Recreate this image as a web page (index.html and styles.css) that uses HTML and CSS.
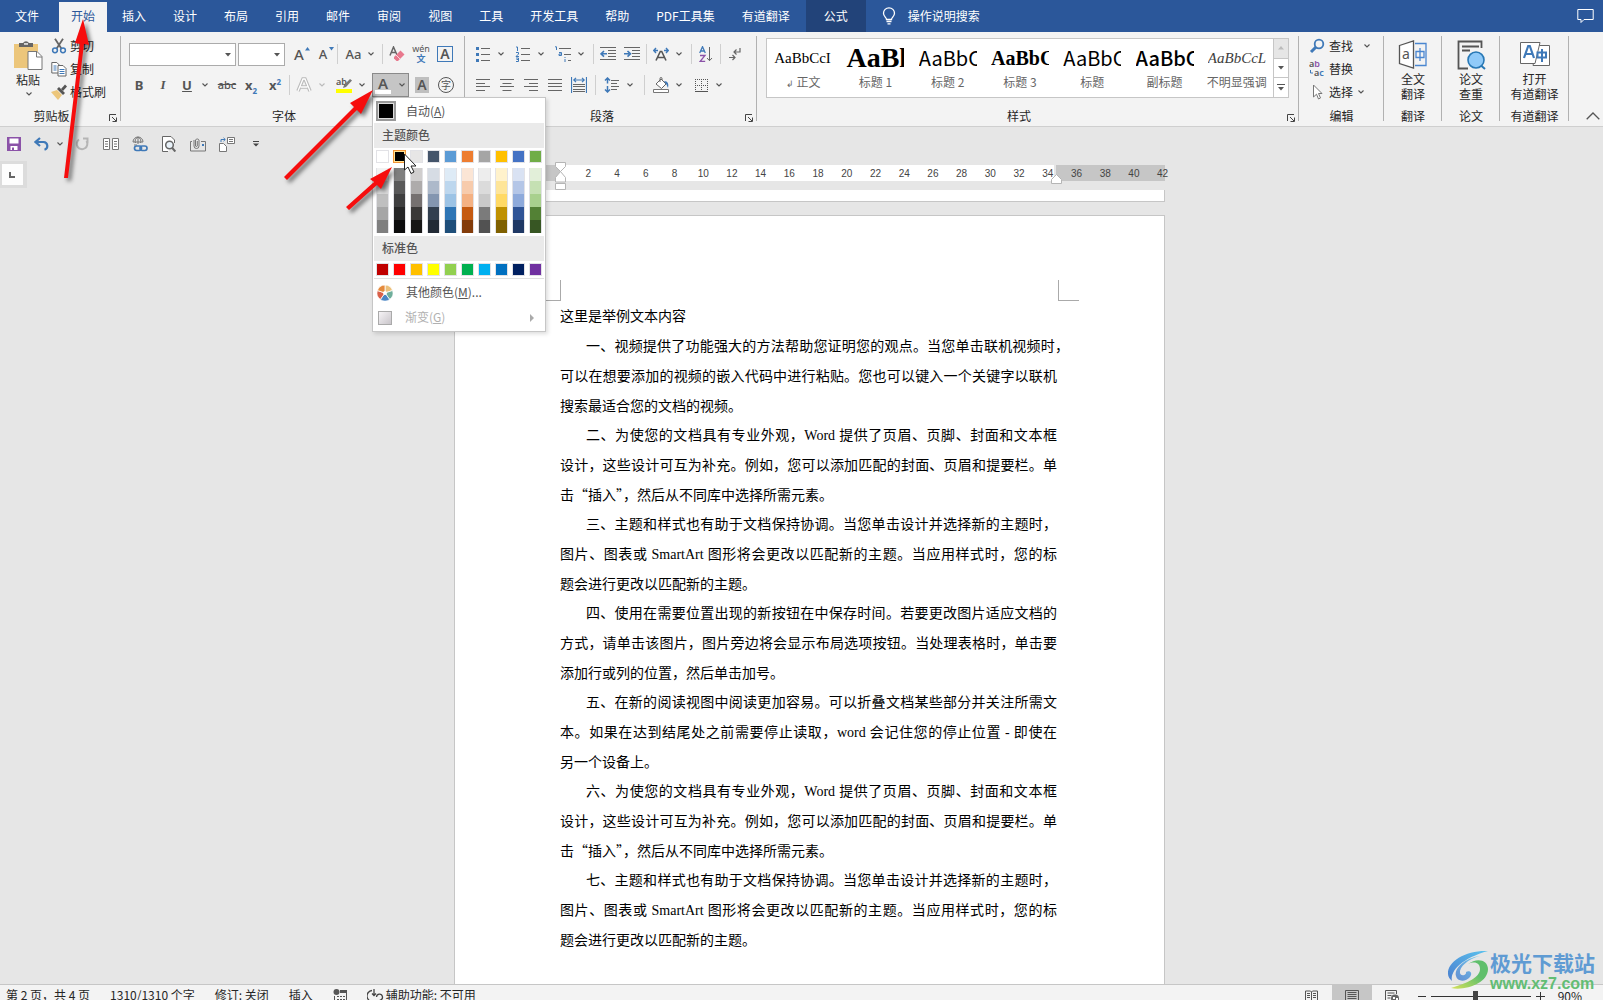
FILE: index.html
```html
<!DOCTYPE html>
<html lang="zh-CN">
<head>
<meta charset="utf-8">
<title>文档</title>
<link rel="stylesheet" href="styles.css">
</head>
<body>
<svg class="defs" aria-hidden="true">
  <symbol id="chev" viewBox="0 0 6 4"><path d="m.5.5 2.500 2.500L5.500.5" fill="none" stroke="currentColor" stroke-width="1.100"/></symbol>
  <symbol id="tri" viewBox="0 0 6 4"><path d="M0 0h6L3 3.500z" fill="currentColor"/></symbol>
  <symbol id="launch" viewBox="0 0 8 8"><path d="M.5 7V.5H7M3 3l4 4M7.500 3.500v4h-4" fill="none" stroke="#444"/></symbol>
</svg>

<nav class="tabs" aria-label="功能区选项卡">
  <button class="tab tab-file">文件</button>
  <button class="tab tab-active">开始</button>
  <button class="tab">插入</button>
  <button class="tab">设计</button>
  <button class="tab">布局</button>
  <button class="tab">引用</button>
  <button class="tab">邮件</button>
  <button class="tab">审阅</button>
  <button class="tab">视图</button>
  <button class="tab">工具</button>
  <button class="tab">开发工具</button>
  <button class="tab">帮助</button>
  <button class="tab">PDF工具集</button>
  <button class="tab">有道翻译</button>
  <button class="tab tab-context">公式</button>
  <button class="tell-me">
    <svg width="14" height="18" viewBox="0 0 14 18" fill="none" stroke="#fff" stroke-width="1.300"><path d="M4.500 12.500c0-2-3-3-3-6.200a5.500 5.500 0 0 1 11 0c0 3.200-3 4.200-3 6.200zM4.500 14.500h5M5.500 16.800h3"/></svg>
    操作说明搜索
  </button>
  <button class="comments" aria-label="批注">
    <svg width="17" height="16" viewBox="0 0 17 16" fill="none" stroke="#fff"><path d="M.8 1.500h15.400v10H7l-3 3v-3H.8z"/></svg>
  </button>
</nav>

<section class="ribbon" aria-label="开始">
  <div class="group group-clip">
    <div class="clip-body">
      <button class="big-btn paste">
        <svg width="30" height="31" viewBox="0 0 30 31"><path d="M1 4h24v24H1z" fill="#ecc67b"/><path d="M6 7V3h4a3.500 3.500 0 0 1 6 0h4v4z" fill="#666"/><path d="M11 3.200h4v1.500h-4z" fill="#f3f3f3"/><path d="M15 11.500h9l5 5v13H15z" fill="#fff" stroke="#777"/><path d="M23.500 11.500v5.500h5.500" fill="none" stroke="#777"/></svg>
        <span>粘贴</span>
        <svg class="chev-icon" width="6" height="4"><use href="#chev"/></svg>
      </button>
      <div class="stack">
        <button class="row-btn">
          <svg width="16" height="16" viewBox="0 0 16 16" fill="none"><path d="m4 .8 6.500 10M12 .8 5.500 10.800" stroke="#666" stroke-width="1.800"/><circle cx="4" cy="12.300" r="2.400" stroke="#3f79b8" stroke-width="1.500"/><circle cx="12" cy="12.300" r="2.400" stroke="#3f79b8" stroke-width="1.500"/></svg>剪切</button>
        <button class="row-btn">
          <svg width="16" height="16" viewBox="0 0 16 16" fill="#fff" stroke="#666"><path d="M.8 1.500h5l2.500 2.500v8H.8z"/><path d="M7 4.500h5l3 3v7.500H7z"/><path d="M2.500 5h3M2.500 7h3M2.500 9h3M8.500 8.500h5M8.500 10.500h5M8.500 12.500h5" stroke="#3f79b8"/></svg>复制</button>
        <button class="row-btn">
          <svg width="16" height="16" viewBox="0 0 16 16"><path d="m0 8 6-2 5 5-4 5z" fill="#ecc67b"/><path d="m6 5 2-2 6 6-2 2z" fill="#555"/><path d="m10 5 4-4.500 2 2L12 7z" fill="#555"/></svg>格式刷</button>
      </div>
    </div>
    <div class="group-label has-launch"><span>剪贴板</span><button class="launch" aria-label="剪贴板设置"><svg width="8" height="8"><use href="#launch"/></svg></button></div>
  </div>

  <div class="group group-font">
    <div class="rows">
      <div class="row">
        <span class="combo combo-font"><select aria-label="字体"><option></option></select><svg width="6" height="4"><use href="#tri"/></svg></span>
        <span class="combo combo-size"><select aria-label="字号"><option></option></select><svg width="6" height="4"><use href="#tri"/></svg></span>
        <button class="btn" aria-label="增大字号"><span class="glyph g16">A</span><svg class="sup" width="5" height="4" viewBox="0 0 5 4"><path d="M0 3.500h5L2.500 0z" fill="#3f79b8"/></svg></button>
        <button class="btn" aria-label="减小字号"><span class="glyph g13">A</span><svg class="sup" width="5" height="4" viewBox="0 0 5 4"><path d="M0 0h5L2.500 3.500z" fill="#3f79b8"/></svg></button>
        <i class="sep"></i>
        <button class="btn btn-case" aria-label="更改大小写"><span class="glyph g13">Aa</span><svg width="6" height="4"><use href="#chev"/></svg></button>
        <i class="sep"></i>
        <button class="btn" aria-label="清除格式"><svg width="16" height="16" viewBox="0 0 16 16"><path d="M1 9.500 4.500 1 8 9M2.300 6.500h4" fill="none" stroke="#666" stroke-width="1.500"/><path d="m5 11 6.500-6.500 4 4L9 15H7.500L5 12.500z" fill="#e8788d"/><path d="m7 9 4.200 4.200" stroke="#f9d5db"/></svg></button>
        <button class="btn btn-pinyin" aria-label="拼音指南"><span>wén</span><span class="blue">文</span></button>
        <button class="btn" aria-label="字符边框"><span class="char-box">A</span></button>
      </div>
      <div class="row">
        <button class="btn"><b class="glyph g14">B</b></button>
        <button class="btn"><b class="glyph g14 ital">I</b></button>
        <button class="btn"><b class="glyph g14 under">U</b></button>
        <button class="chev" aria-label="下划线选项"><svg width="6" height="4"><use href="#chev"/></svg></button>
        <button class="btn"><span class="glyph g12 strike">abc</span></button>
        <button class="btn"><span class="glyph g14">x<sub>2</sub></span></button>
        <button class="btn"><span class="glyph g14">x<sup>2</sup></span></button>
        <i class="sep"></i>
        <button class="btn" aria-label="文本效果"><svg width="16" height="16" viewBox="0 0 16 16"><path d="M2 14 7 2h2l5 12M4.500 10h7" fill="none" stroke="#bbb" stroke-width="3.500"/><path d="M2 14 7 2h2l5 12M4.500 10h7" fill="none" stroke="#fff" stroke-width="1.300"/></svg></button>
        <button class="chev dim" aria-label="文本效果选项"><svg width="6" height="4"><use href="#chev"/></svg></button>
        <button class="btn btn-mark" aria-label="突出显示"><svg width="16" height="16" viewBox="0 0 16 16"><text x="0" y="8" class="svg-ab">ab</text><path d="m7 11 1-3 6-6 2 1.500-6 6.500z" fill="#777"/><path d="M0 12h16v4H0z" fill="#ff0"/></svg></button>
        <button class="chev" aria-label="突出显示选项"><svg width="6" height="4"><use href="#chev"/></svg></button>
        <div class="color-drop">
          <button class="color-btn" aria-label="字体颜色" aria-expanded="true"><span class="color-a">A</span><svg width="6" height="4"><use href="#chev"/></svg></button>
          <div class="color-menu" role="menu">
            <button class="menu-row auto-row"><i class="auto-swatch"></i><span>自动(<u>A</u>)</span></button>
            <h3 class="menu-head">主题颜色</h3>
            <div class="swatches" id="theme"></div>
            <div class="shades" id="shades"></div>
            <h3 class="menu-head">标准色</h3>
            <div class="swatches" id="standard"></div>
            <button class="menu-row more-row">
              <svg width="16" height="16" viewBox="0 0 16 16"><g stroke="#fff" stroke-width=".8"><path d="M8 8V0a8 8 0 0 1 7.600 5.500z" fill="#ecc07b"/><path d="m8 8 7.600-2.500a8 8 0 0 1-2.900 9z" fill="#6fae9b"/><path d="m8 8 4.700 6.500a8 8 0 0 1-9.400 0z" fill="#4a86c5"/><path d="m8 8-4.700 6.500a8 8 0 0 1-2.900-9z" fill="#d9604a"/><path d="M8 8 .4 5.500A8 8 0 0 1 8 0z" fill="#e58a3c"/></g><circle cx="8" cy="8" r="2" fill="#fff"/></svg>
              <span>其他颜色(<u>M</u>)...</span></button>
            <button class="menu-row grad-row" disabled><i class="grad-swatch"></i><span>渐变(<u>G</u>)</span><svg class="sub-arrow" width="4" height="8" viewBox="0 0 4 8"><path d="M0 0v8l4-4z" fill="#aaa"/></svg></button>
          </div>
        </div>
        <button class="btn" aria-label="字符底纹"><span class="char-shade">A</span></button>
        <button class="btn" aria-label="带圈字符"><span class="char-ring">字</span></button>
      </div>
    </div>
    <div class="group-label has-launch"><span>字体</span></div>
  </div>

  <div class="group group-para">
    <div class="rows">
      <div class="row">
        <button class="btn" aria-label="项目符号"><svg width="16" height="16" viewBox="0 0 16 16"><path d="M1 1h3v3H1zM1 7h3v3H1zM1 13h3v3H1z" fill="#3f79b8"/><path d="M6 2.500h9M6 8.500h9M6 14.500h9" stroke="#666"/></svg></button>
        <button class="chev" aria-label="项目符号选项"><svg width="6" height="4"><use href="#chev"/></svg></button>
        <button class="btn" aria-label="编号"><svg width="16" height="16" viewBox="0 0 16 16"><path d="M1 1h1.500v4M1 6.500h2.500V8L1 10.500h3M1 12h2.500v3.500H1M1.500 13.500h2" fill="none" stroke="#3f79b8"/><path d="M6 2.500h9M6 8.500h9M6 14.500h9" stroke="#666"/></svg></button>
        <button class="chev" aria-label="编号选项"><svg width="6" height="4"><use href="#chev"/></svg></button>
        <button class="btn" aria-label="多级列表"><svg width="16" height="16" viewBox="0 0 16 16"><path d="M0 .8h1.500V4M4 6.500h2.500V9.500H4V8h2.500M10 11v1M10 13v3" fill="none" stroke="#3f79b8"/><path d="M4 2.500h12M9 8.500h7M13 14.500h3" stroke="#666"/></svg></button>
        <button class="chev" aria-label="多级列表选项"><svg width="6" height="4"><use href="#chev"/></svg></button>
        <i class="sep"></i>
        <button class="btn" aria-label="减少缩进"><svg width="16" height="14" viewBox="0 0 16 14"><path d="M0 .5h16M8 3.500h8M8 6.500h8M8 9.500h8M0 12.500h16" stroke="#666"/><path d="M7 6.800H2M4 4 1 6.800 4 9.600" fill="none" stroke="#3f79b8" stroke-width="1.600"/></svg></button>
        <button class="btn" aria-label="增加缩进"><svg width="16" height="14" viewBox="0 0 16 14"><path d="M0 .5h16M8 3.500h8M8 6.500h8M8 9.500h8M0 12.500h16" stroke="#666"/><path d="M0 6.800h5M3.500 4l3 2.800-3 2.800" fill="none" stroke="#3f79b8" stroke-width="1.600"/></svg></button>
        <i class="sep"></i>
        <button class="btn" aria-label="中文版式"><svg width="16" height="14" viewBox="0 0 16 14"><path d="m3 13.500 4.300-9h1.400l4.300 9M5 10.500h6" fill="none" stroke="#555" stroke-width="1.600"/><path d="M1 3.500h4M3 1 .8 3.500 3 6M11 3.500h4M13 1l2.200 2.500L13 6" fill="none" stroke="#3f79b8" stroke-width="1.400"/></svg></button>
        <button class="chev" aria-label="中文版式选项"><svg width="6" height="4"><use href="#chev"/></svg></button>
        <i class="sep"></i>
        <button class="btn" aria-label="排序"><svg width="14" height="16" viewBox="0 0 14 16" fill="none"><path d="M.7 7 3.500.7 6.300 7M1.500 5h4" stroke="#3f79b8" stroke-width="1.300"/><path d="M1 9.500h5l-5 6h5.200" stroke="#8b52a8" stroke-width="1.300"/><path d="M10.500 1v13.500M8 12l2.500 2.700L13 12" stroke="#666"/></svg></button>
        <i class="sep"></i>
        <button class="btn" aria-label="显示编辑标记"><svg width="12" height="14" viewBox="0 0 12 14" fill="none" stroke="#666" stroke-width="1.200"><path d="M11 1v4H5.500M7.500 2.500 5 5l2.500 2.500M0 10.500h5.500M3.500 8 6 10.500 3.500 13"/></svg></button>
      </div>
      <div class="row">
        <button class="btn" aria-label="左对齐"><svg width="14" height="12" viewBox="0 0 14 12" stroke="#666"><path d="M0 .5h14M0 4.500h9M0 7.500h14M0 11.500h9"/></svg></button>
        <button class="btn" aria-label="居中"><svg width="14" height="12" viewBox="0 0 14 12" stroke="#666"><path d="M0 .5h14M2.500 4.500h9M0 7.500h14M2.500 11.500h9"/></svg></button>
        <button class="btn" aria-label="右对齐"><svg width="14" height="12" viewBox="0 0 14 12" stroke="#666"><path d="M0 .5h14M5 4.500h9M0 7.500h14M5 11.500h9"/></svg></button>
        <button class="btn" aria-label="两端对齐"><svg width="14" height="12" viewBox="0 0 14 12" stroke="#666"><path d="M0 .5h14M0 4.500h14M0 7.500h14M0 11.500h14"/></svg></button>
        <button class="btn" aria-label="分散对齐"><svg width="16" height="16" viewBox="0 0 16 16" fill="none"><path d="M.5 0v16M15.500 0v16M3 3h10M5 .8 2.800 3 5 5.200M11 .8 13.200 3 11 5.200" stroke="#3f79b8" stroke-width="1.200"/><path d="M2 7.500h12M2 9.500h12M2 12.500h12M2 14.500h12" stroke="#666"/></svg></button>
        <i class="sep sep-wide"></i>
        <button class="btn" aria-label="行距"><svg width="16" height="16" viewBox="0 0 16 16" fill="none"><path d="M3.500 1v5.500M3.500 9v6M1 3.500 3.500 1 6 3.500M1 12.500 3.500 15 6 12.500" stroke="#3f79b8" stroke-width="1.500"/><path d="M7 3.500h8M7 6.500h6M7 9.500h8M7 12.500h6" stroke="#666"/></svg></button>
        <button class="chev" aria-label="行距选项"><svg width="6" height="4"><use href="#chev"/></svg></button>
        <i class="sep sep-wide"></i>
        <button class="btn" aria-label="底纹"><svg width="16" height="16" viewBox="0 0 16 16"><path d="m3 7 5-5 5 5-4.500 4.500z" fill="#fff" stroke="#666"/><path d="M7 5V1.500a1 1 0 0 1 2 0V3" fill="none" stroke="#666"/><path d="M11 4c4 0 5 3 4 7-1-2-1-3-2-4z" fill="#3f79b8"/><path d="M.5 12.500h15v3H.5z" fill="#fff" stroke="#777"/></svg></button>
        <button class="chev" aria-label="底纹选项"><svg width="6" height="4"><use href="#chev"/></svg></button>
        <button class="btn" aria-label="边框"><svg width="13" height="13" viewBox="0 0 13 13" fill="none" stroke="#555"><path d="M0 .5h13M.5 0v13M6.500 0v13M12.500 0v13M0 6.500h13" stroke-dasharray="1 1"/><path d="M0 12.500h13"/></svg></button>
        <button class="chev" aria-label="边框选项"><svg width="6" height="4"><use href="#chev"/></svg></button>
      </div>
    </div>
    <div class="group-label has-launch"><span>段落</span><button class="launch" aria-label="段落设置"><svg width="8" height="8"><use href="#launch"/></svg></button></div>
  </div>

  <div class="group group-styles">
    <div class="gallery">
      <button class="style"><span class="sample s-body">AaBbCcI</span><span><small>↲</small> 正文</span></button>
      <button class="style"><span class="sample s-h1">AaBl</span><span>标题 1</span></button>
      <button class="style"><span class="sample s-h2">AaBbC</span><span>标题 2</span></button>
      <button class="style"><span class="sample s-h3">AaBbC</span><span>标题 3</span></button>
      <button class="style"><span class="sample s-h2">AaBbC</span><span>标题</span></button>
      <button class="style"><span class="sample s-sub">AaBbC</span><span>副标题</span></button>
      <button class="style"><span class="sample s-em">AaBbCcL</span><span>不明显强调</span></button>
      <div class="gallery-nav">
        <button disabled aria-label="上一行"><svg width="6" height="4" viewBox="0 0 6 4"><path d="M0 3.500h6L3 0z" fill="#bbb"/></svg></button>
        <button aria-label="下一行"><svg width="6" height="4"><use href="#tri"/></svg></button>
        <button aria-label="其他样式"><svg width="8" height="7" viewBox="0 0 8 7"><path d="M0 .5h8" stroke="#555"/><path d="M1 3h6L4 6.500z" fill="#555"/></svg></button>
      </div>
    </div>
    <div class="group-label has-launch"><span>样式</span><button class="launch" aria-label="样式设置"><svg width="8" height="8"><use href="#launch"/></svg></button></div>
  </div>

  <div class="group group-edit">
    <div class="stack">
      <button class="row-btn"><svg width="16" height="16" viewBox="0 0 16 16" fill="none" stroke="#3f79b8"><circle cx="10" cy="6" r="4.300" stroke-width="1.800"/><path d="m7 9-5 5" stroke-width="3"/></svg>查找<svg class="far" width="6" height="4"><use href="#chev"/></svg></button>
      <button class="row-btn"><svg width="16" height="16" viewBox="0 0 16 16"><text x="0" y="6" class="svg-ab">a<tspan fill="#8b52a8">b</tspan></text><text x="5" y="15" class="svg-ab">a<tspan fill="#3f79b8">c</tspan></text><path d="M1.500 9v3h2.500" fill="none" stroke="#3f79b8"/></svg>替换</button>
      <button class="row-btn"><svg width="16" height="16" viewBox="0 0 16 16"><path d="M4.500 1v12l3-2.800 2 4.800 2-1-2-4.500h3.500z" fill="#fff" stroke="#777"/></svg>选择<svg class="near" width="6" height="4"><use href="#chev"/></svg></button>
    </div>
    <div class="group-label"><span>编辑</span></div>
  </div>

  <div class="group group-add">
    <button class="big-btn">
      <svg width="30" height="30" viewBox="0 0 30 30" fill="none"><path d="M1.500 5.500 15.500 1v27l-14-4.500z" fill="#fff" stroke="#555" stroke-width="1.300"/><path d="M17 3.500h11v22H17" stroke="#4a86d0" stroke-width="1.300"/><text x="4" y="19" class="svg-a">a</text><path d="M18 11.500h8v6h-8zM22 8v13" stroke="#4a86d0" stroke-width="1.300"/></svg>
      <span>全文<br>翻译</span></button>
    <div class="group-label"><span>翻译</span></div>
  </div>
  <div class="group group-add">
    <button class="big-btn">
      <svg width="30" height="30" viewBox="0 0 30 30" fill="none"><path d="M25.500 8V1.500h-23v27H12" stroke="#555" stroke-width="1.800"/><path d="M6 6.500h17M6 10.500h8" stroke="#555" stroke-width="2"/><circle cx="20" cy="20" r="8" fill="#90caf9" stroke="#2878b5" stroke-width="1.600"/><path d="m25 25.500 4 3.500" stroke="#2878b5" stroke-width="2"/></svg>
      <span>论文<br>查重</span></button>
    <div class="group-label"><span>论文</span></div>
  </div>
  <div class="group group-youdao">
    <button class="big-btn">
      <svg width="30" height="30" viewBox="0 0 30 30" fill="none"><path d="M17 5.500h12.500v20H13z" fill="#fff" stroke="#666"/><path d="M.5 2.500h19.500l-5 21H.5z" fill="#fff" stroke="#666"/><path d="M4 18 8.200 6h1.600L14 18M5.500 14h7" stroke="#3f79b8" stroke-width="2.200"/><path d="M17.500 12.500h8.500v5h-8.500zM22 9v13" stroke="#3f79b8" stroke-width="2"/></svg>
      <span>打开<br>有道翻译</span></button>
    <div class="group-label"><span>有道翻译</span></div>
  </div>
  <button class="collapse" aria-label="折叠功能区"><svg width="14" height="8" viewBox="0 0 14 8" fill="none" stroke="#555" stroke-width="1.300"><path d="m.7 7.300 6.300-6.300 6.300 6.300"/></svg></button>
</section>

<div class="quick" role="toolbar" aria-label="快速访问工具栏">
  <button class="btn q-save" aria-label="保存"><svg width="14" height="14" viewBox="0 0 14 14"><path d="M0 0h14v14H0z" fill="#8b52a8"/><path d="M2.500 1.500h9v5h-9zM3.500 9h7v4h-7z" fill="#fff"/><path d="M5 10.500h2V13H5z" fill="#8b52a8"/></svg></button>
  <button class="btn" aria-label="撤消"><svg width="16" height="14" viewBox="0 0 16 14" fill="none" stroke="#3f79b8" stroke-width="2.200"><path d="M6 1 1.500 5 6 9M2 5h7.500a4 4 0 0 1 1 7.800"/></svg></button>
  <button class="chev" aria-label="撤消选项"><svg width="6" height="4"><use href="#chev"/></svg></button>
  <button class="btn" aria-label="重复"><svg width="14" height="14" viewBox="0 0 14 14" fill="none" stroke="#b5b5b5" stroke-width="2"><path d="M4 2.500A5.300 5.300 0 1 0 11.500 4M8 1.500h4.500V6"/></svg></button>
  <button class="btn" aria-label="双页"><svg width="16" height="12" viewBox="0 0 16 12" fill="#fff" stroke="#777"><path d="M.5.5h6v11h-6zM9.500.5h6v11h-6zM2 3.500h3M2 6h3M2 8.500h3M11 3.500h3M11 6h3M11 8.500h3"/></svg></button>
  <button class="btn" aria-label="插入链接"><svg width="16" height="16" viewBox="0 0 16 16" fill="none"><path d="M1 6a5 5 0 0 1 10 0M1 6h10M6 1v7M3.500 7c-1-2 0-5 2.500-6 2.500 1 3.500 4 2.500 6M2 9h3" stroke="#777"/><rect x="2.500" y="10" width="7" height="4.500" rx="2.200" stroke="#3f79b8" stroke-width="1.700"/><rect x="8" y="10" width="7" height="4.500" rx="2.200" stroke="#3f79b8" stroke-width="1.700"/></svg></button>
  <button class="btn" aria-label="打印预览"><svg width="14" height="16" viewBox="0 0 14 16" fill="none" stroke="#666"><path d="M12.500 7V4L9 .5H.5v15H6" fill="#fff"/><circle cx="7.500" cy="9" r="3.800" fill="#e8f1f8" stroke-width="1.500"/><path d="m10.300 12 3 3.500" stroke-width="2"/></svg></button>
  <button class="btn" aria-label="附件"><svg width="16" height="15" viewBox="0 0 16 15" fill="none" stroke="#777"><path d="M2 4.500H.5v9.500h15V4.500H11"/><path d="M4 3v6a2.500 2.500 0 0 0 5 0V3a2 2 0 0 0-3.500 0v6a1 1 0 0 0 1.800 0V4"/><path d="M12 7h2v2h-2z" fill="#3f79b8" stroke="none"/></svg></button>
  <button class="btn" aria-label="转换"><svg width="16" height="15" viewBox="0 0 16 15" fill="#fff" stroke="#777"><path d="M8.500.5h7v6h-7zM10 2.500h4M10 4.500h4M.5 6.500h4l3 3v5h-7z"/><path d="M2 5V2.500h4M4.500.8 6.300 2.500 4.500 4.200" fill="none" stroke="#3f79b8"/></svg></button>
  <button class="btn" aria-label="自定义快速访问工具栏"><svg width="6" height="6" viewBox="0 0 6 6"><path d="M0 .5h6" stroke="#444"/><path d="M0 2.500h6L3 5.500z" fill="#444"/></svg></button>
</div>

<main class="workspace">
  <div class="ruler-row">
    <button class="tab-stop" aria-label="制表符"><svg width="7" height="7" viewBox="0 0 7 7"><path d="M1 1v5h5" fill="none" stroke="#666" stroke-width="2"/></svg></button>
    <div class="ruler-wrap">
      <div class="ruler">
        <i class="r-margin-left"></i><i class="r-body"></i><i class="r-margin-right"></i>
        <div class="r-nums"><span>2</span><span>4</span><span>6</span><span>8</span><span>10</span><span>12</span><span>14</span><span>16</span><span>18</span><span>20</span><span>22</span><span>24</span><span>26</span><span>28</span><span>30</span><span>32</span><span>34</span><span>36</span><span>38</span><span>40</span><span>42</span></div>
        <svg class="r-indent" width="11" height="28" viewBox="0 0 11 28" fill="#fff" stroke="#b5b5b5"><path d="M.5.5h10v4l-5 5 5 6V20H.500v-4.500l5-6-5-5zM.5 21.500h10v6H.500z"/></svg>
        <svg class="r-right" width="11" height="10" viewBox="0 0 11 10" fill="#fff" stroke="#b5b5b5"><path d="M.5 9.500V5.500l5-5 5 5v4z"/></svg>
      </div>
    </div>
  </div>
  <div class="pages">
    <div class="prev-page"></div>
    <article class="page">
      <i class="corner corner-l"></i><i class="corner corner-r"></i>
      <p class="first">这里是举例文本内容</p>
      <p><span class="in hang">一、视频提供了功能强大的方法帮助您证明您的观点。当您单击联机视频时，</span><span>可以在想要添加的视频的嵌入代码中进行粘贴。您也可以键入一个关键字以联机</span><span>搜索最适合您的文档的视频。</span></p>
      <p><span class="in">二、为使您的文档具有专业外观，Word 提供了页眉、页脚、封面和文本框</span><span>设计，这些设计可互为补充。例如，您可以添加匹配的封面、页眉和提要栏。单</span><span>击<i class="quoted">“插入”，</i>然后从不同库中选择所需元素。</span></p>
      <p><span class="in">三、主题和样式也有助于文档保持协调。当您单击设计并选择新的主题时，</span><span>图片、图表或 SmartArt 图形将会更改以匹配新的主题。当应用样式时，您的标</span><span>题会进行更改以匹配新的主题。</span></p>
      <p><span class="in">四、使用在需要位置出现的新按钮在中保存时间。若要更改图片适应文档的</span><span>方式，请单击该图片，图片旁边将会显示布局选项按钮。当处理表格时，单击要</span><span>添加行或列的位置，然后单击加号。</span></p>
      <p><span class="in">五、在新的阅读视图中阅读更加容易。可以折叠文档某些部分并关注所需文</span><span>本。如果在达到结尾处之前需要停止读取，word 会记住您的停止位置 - 即使在</span><span>另一个设备上。</span></p>
      <p><span class="in">六、为使您的文档具有专业外观，Word 提供了页眉、页脚、封面和文本框</span><span>设计，这些设计可互为补充。例如，您可以添加匹配的封面、页眉和提要栏。单</span><span>击<i class="quoted">“插入”，</i>然后从不同库中选择所需元素。</span></p>
      <p><span class="in">七、主题和样式也有助于文档保持协调。当您单击设计并选择新的主题时，</span><span>图片、图表或 SmartArt 图形将会更改以匹配新的主题。当应用样式时，您的标</span><span>题会进行更改以匹配新的主题。</span></p>
    </article>
  </div>
</main>

<footer class="status">
  <span>第 2 页，共 4 页</span>
  <span>1310/1310 个字</span>
  <span>修订: 关闭</span>
  <span>插入</span>
  <svg width="14" height="14" viewBox="0 0 14 14"><circle cx="3.500" cy="3" r="3" fill="#555"/><path d="M7 1.500h6.500V14M1.500 7v7" stroke="#555" fill="none"/><path d="M7 1h7v3H7z" fill="#555"/><path d="M4 7.500h8M4 10.500h8M4 13.500h8" stroke="#555" stroke-dasharray="2 1"/></svg>
  <span class="access"><svg width="17" height="14" viewBox="0 0 17 14" fill="none" stroke="#444" stroke-width="1.300"><path d="M5 1.500a5.500 5.500 0 0 0 1 11M7 0v6M5 4.500l2 2 2-2M9.500 8a3 3 0 1 1 4 3c-1 .5-1.500 1-1.500 2"/></svg>辅助功能: 不可用</span>
  <div class="views">
    <button class="view" aria-label="阅读视图"><svg width="13" height="12" viewBox="0 0 13 12" fill="none" stroke="#555"><path d="M.5 1h5l1 1 1-1h5v10h-5l-1 1-1-1h-5zM6.500 2v10M2 3.500h3M2 5.500h3M2 7.500h3M8 3.500h3M8 5.500h3M8 7.500h3"/></svg></button>
    <button class="view view-on" aria-label="页面视图"><svg width="14" height="12" viewBox="0 0 14 12" fill="none" stroke="#555"><path d="M.5.500h13v12M.5.500v12M2.500 2.500h9M2.500 4.500h9M2.500 6.500h9M2.500 8.500h9M2.500 10.500h9"/></svg></button>
    <button class="view" aria-label="Web 版式视图"><svg width="14" height="12" viewBox="0 0 14 12" fill="none" stroke="#555"><path d="M11.500 4V.5H.5v11H6M2.500 3h7M2.500 5.500h4M2.500 8h3"/><circle cx="10" cy="8.500" r="4" fill="#666" stroke="none"/><path d="M8 7h2v2H8zM11 8h2v2h-2z" fill="#fff" stroke="none"/></svg></button>
    <button class="zoom-btn" aria-label="缩小"><svg width="8" height="9"><path d="M0 4.500h8" stroke="#333"/></svg></button>
    <input class="zoom" type="range" min="0" max="100" value="45" aria-label="显示比例">
    <button class="zoom-btn zoom-plus" aria-label="放大"><svg width="9" height="9"><path d="M0 4.500h9M4.500 0v9" stroke="#333"/></svg></button>
    <span class="pct">90%</span>
  </div>
</footer>

<div class="watermark">
  <svg width="42" height="40" viewBox="0 0 42 40"><defs><linearGradient id="wb" x1="0" y1="1" x2="1" y2="0"><stop offset="0" stop-color="#4a7fcf"/><stop offset="1" stop-color="#5cc3ee"/></linearGradient><linearGradient id="wg" x1="0" y1="1" x2="1" y2="0"><stop offset="0" stop-color="#d9e25a"/><stop offset=".6" stop-color="#5fbf6c"/></linearGradient></defs><path d="M41 1C20 0 0 11 1 24c0 3 2 5 4 7C3 20 16 8 41 1z" fill="url(#wb)"/><path d="M33 6C18 8 7 18 9 26c1 6 10 6 14 1 3-4 0-7-4-5 1 3-5 5-6 1-1-6 8-14 20-17z" fill="url(#wb)" opacity=".85"/><path d="M21 14c7-3 12-1 12 5 0 8-12 14-29 19 15 3 37-5 37-19 0-9-11-12-20-5z" fill="url(#wg)"/></svg>
  <div><strong>极光下载站</strong><em>www.xz7.com</em></div>
</div>

<svg class="arrows" width="480" height="230" viewBox="0 0 480 230" aria-hidden="true">
  <g class="red">
    <path d="m64 178 16-134-5-1 8-24 6 26-5-1-16 134z"/>
    <path d="m284 177 70-70-4-4 23-13-12 24-4-4-70 70z"/>
    <path d="m346 207 28-25-4-3 22-12-11 22-4-4-28 25z"/>
  </g>
  <path d="M404.500 154v16l3.500-3 3 6.500 3-1.500-3-6h5z" fill="#fff" stroke="#222"/>
</svg>
<script src="script.js"></script>
</body>
</html>
```
FILE: script.js
```js
const theme = ['#ffffff', '#000000', '#e7e6e6', '#44546a', '#5b9bd5', '#ed7d31', '#a5a5a5', '#ffc000', '#4472c4', '#70ad47'];
const shades = [
  ['#f2f2f2', '#d9d9d9', '#bfbfbf', '#a6a6a6', '#7f7f7f'],
  ['#7f7f7f', '#595959', '#3f3f3f', '#262626', '#0c0c0c'],
  ['#d0cece', '#aeabab', '#757070', '#3a3838', '#171616'],
  ['#d6dce4', '#adb9ca', '#8496b0', '#323f4f', '#222a35'],
  ['#deebf6', '#bdd7ee', '#9cc3e5', '#2e75b5', '#1e4e79'],
  ['#fbe5d5', '#f7cbac', '#f4b183', '#c55a11', '#833c0b'],
  ['#ededed', '#dbdbdb', '#c9c9c9', '#7b7b7b', '#525252'],
  ['#fff2cc', '#fee599', '#ffd965', '#bf9000', '#7f6000'],
  ['#d9e2f3', '#b4c6e7', '#8eaadb', '#2f5496', '#1f3864'],
  ['#e2efd9', '#c5e0b3', '#a8d08d', '#538135', '#375623']
];
const standard = ['#c00000', '#ff0000', '#ffc000', '#ffff00', '#92d050', '#00b050', '#00b0f0', '#0070c0', '#002060', '#7030a0'];

function swatch(color) {
  const b = document.createElement('button');
  b.className = 'swatch';
  b.style.backgroundColor = color;
  b.setAttribute('aria-label', color);
  return b;
}
document.getElementById('theme').append(...theme.map(swatch));
document.getElementById('theme').children[1].classList.add('swatch-on');
document.getElementById('standard').append(...standard.map(swatch));
for (const column of shades) {
  const div = document.createElement('div');
  div.className = 'shade-col';
  div.append(...column.map(swatch));
  document.getElementById('shades').append(div);
}
```
FILE: styles.css
```css
* { box-sizing: border-box; }
html, body { height: 100%; }
body {
  margin: 0;
  display: flex;
  flex-direction: column;
  position: relative;
  overflow: hidden;
  background: #e6e6e6;
  color: #262626;
  font: 12px/16px "Noto Sans CJK SC", sans-serif;
}
button, select, input { font: inherit; color: inherit; margin: 0; padding: 0; border: 0; background: none; }
svg { display: block; flex: none; }
.defs { position: absolute; width: 0; height: 0; }

/* tab strip */
.tabs { display: flex; flex: none; height: 32px; padding-left: 3px; background: #2b579a; color: #fff; }
.tab { padding: 0 12px 3px; margin: 2px 3px 0 0; height: 30px; white-space: nowrap; }
.tab-file { margin-right: 8px; }
.tab-active { background: #f3f3f3; color: #2b579a; }
.tab-context { margin: 0 0 0 1px; padding: 0 18px 1px; height: 32px; background: #224379; }
.tell-me { display: flex; align-items: center; gap: 12px; margin-left: 16px; padding-bottom: 1px; white-space: nowrap; }
.comments { margin: 0 9px 0 auto; }

/* ribbon */
.ribbon { display: flex; flex: none; padding: 4px 0 2px; background: #f3f3f3; border-bottom: 1px solid #cfcfcf; }
.group {
  display: flex;
  flex-direction: column;
  flex: none;
  height: 88px;
  background: linear-gradient(#b1b1b1, #b1b1b1) right top / 1px calc(100% - 3px) no-repeat;
}
.group-clip { width: 121px; }
.group-font { width: 344px; }
.group-para { width: 292px; }
.group-styles { flex: 1; min-width: 0; }
.group-edit { width: 85px; padding-left: 10px; }
.group-add { width: 58px; }
.group-youdao { width: 69px; }
.group-label { display: flex; margin-top: auto; height: 16px; justify-content: center; }
.group-edit .group-label { margin-left: -10px; }
.has-launch { position: relative; padding-right: 18px; }
.launch { position: absolute; right: 4px; top: 6px; }

.clip-body { display: flex; }
.big-btn { display: flex; flex-direction: column; align-items: center; width: 100%; padding-top: 4px; line-height: 15px; }
.big-btn svg { margin-bottom: 1px; }
.paste { width: 50px; padding-left: 6px; }
.big-btn .chev-icon { margin: 5px 0 0 2px; color: #555; }
.stack { display: flex; flex-direction: column; padding-top: 2px; }
.row-btn { display: flex; align-items: center; gap: 4px; height: 16px; margin-bottom: 7px; white-space: nowrap; }
.clip-body .row-btn { margin-left: 1px; gap: 3px; }
.stack .row-btn:last-child { margin-bottom: 0; }
.far { margin-left: 7px; }
.near { margin-left: 1px; }
.far, .near { color: #555; }

.rows { display: flex; flex-direction: column; gap: 7px; padding: 6px 0 0 6px; }
.row { display: flex; align-items: center; height: 24px; }
.btn { display: flex; flex: none; position: relative; width: 24px; height: 24px; align-items: center; justify-content: center; color: #555; }
.chev { flex: none; width: 16px; height: 24px; padding-left: 3px; color: #555; }
.dim { color: #bbb; }
.sep { flex: none; width: 1px; height: 20px; margin: 0 2px; background: #cfcfcf; }
.sep-wide { margin: 0 4px; }
.combo { position: relative; height: 23px; margin-right: 2px; color: #555; }
.combo select { appearance: none; width: 100%; height: 100%; background: #fff; border: 1px solid #ababab; border-radius: 0; }
.combo svg { position: absolute; right: 5px; top: 10px; }
.combo-font { width: 107px; margin-left: 2px; }
.combo-size { width: 47px; }
.glyph { font-family: "Noto Sans", "Noto Sans CJK SC", sans-serif; font-weight: 700; }
.glyph sub, .glyph sup { font-size: 8px; line-height: 0; color: #3f79b8; }
.g16 { font-size: 15px; font-weight: 500; }
.g14 { font-size: 13px; }
.g13 { font-size: 13px; font-weight: 500; }
.g12 { font-size: 11px; font-weight: 500; }
.ital { font-style: italic; font-family: "Liberation Serif", serif; }
.under { text-decoration: underline; }
.strike { text-decoration: line-through; }
.sup { position: absolute; right: 1px; top: 5px; }
.btn-case { width: 40px; gap: 7px; }
.btn-pinyin { flex-direction: column; font: 9px/10px "Noto Sans", "Noto Sans CJK SC", sans-serif; }
.blue { color: #3f79b8; font-weight: 700; }
.char-box, .char-shade { width: 16px; height: 16px; border: 1px solid #3f79b8; font: 600 14px/14px "Noto Sans", sans-serif; text-align: center; }
.char-shade { width: 14px; border-color: #bfbfbf; background: #bfbfbf; }
.char-ring { width: 16px; height: 16px; border: 1px solid #555; border-radius: 50%; font-size: 10px; line-height: 13px; text-align: center; }
.svg-ab { font: 600 9px "Noto Sans", sans-serif; fill: #555; }
.svg-a { font: 14px "Noto Sans", sans-serif; fill: #555; }

/* font colour drop-down */
.color-drop { position: relative; margin-right: 2px; }
.color-btn { display: flex; align-items: center; gap: 8px; width: 37px; height: 24px; margin-right: -1px; padding-left: 2px; background: #c5c5c5; border: 1px solid #8a8a8a; color: #555; }
.color-a { width: 16px; height: 18px; border-bottom: 4px solid #fff; font: 600 15px/14px "Noto Sans", sans-serif; text-align: center; }
.color-menu { position: absolute; z-index: 5; left: 0; top: 24px; width: 174px; padding: 1px; background: #fff; border: 1px solid #c6c6c6; box-shadow: 2px 2px 4px #0002; color: #555; }
.menu-row { display: flex; align-items: center; width: 100%; height: 25px; padding-left: 3px; gap: 11px; white-space: nowrap; }
.menu-row span { padding-bottom: 1px; }
.auto-row { height: 24px; padding-left: 2px; gap: 10px; }
.auto-swatch { width: 20px; height: 20px; background: #000; border: 2px solid #999; box-shadow: inset 0 0 0 1px #ddd; }
.menu-head { margin: 0; height: 25px; padding-left: 8px; background: #eaeaea; font-size: 12px; line-height: 23px; font-weight: 500; }
.swatches { display: flex; gap: 4px; padding: 2px 2px; }
.swatch { display: block; width: 13px; height: 13px; border: 1px solid #e2e2e6; flex: none; }
.swatch-on { border-color: #f29436; box-shadow: inset 0 0 0 1px #ffe294; }
.shades { display: flex; gap: 4px; padding: 3px 2px 3px; }
.shade-col { border: 1px solid #e2e2e6; border-width: 0 1px; }
.shade-col .swatch { width: 11px; border: 0; }
.more-row { gap: 13px; height: 27px; padding-top: 1px; border-top: 1px solid #e0e0e0; }
.grad-row { gap: 13px; color: #b1b1b1; padding-left: 4px; }
.grad-swatch { width: 14px; height: 14px; border: 1px solid #aaa; background: linear-gradient(135deg, #f6f4f6, #c9c5ca); }
.sub-arrow { margin: 0 10px 0 auto; }

/* style gallery */
.gallery { display: flex; height: 60px; margin: 2px 10px 0 9px; background: #fff; border: 1px solid #c6c6c6; overflow: hidden; }
.style { display: flex; flex-direction: column; align-items: center; width: 74px; flex: 1; padding-top: 2px; color: #666; white-space: nowrap; }
.sample { width: 58px; height: 33px; overflow: hidden; text-align: left; color: #000; line-height: 35px; }
.s-body { font-family: "Liberation Serif", serif; font-size: 15px; }
.s-h1 { font-family: "Liberation Serif", serif; font-size: 28px; font-weight: 700; line-height: 33px; }
.s-h2 { font-size: 20px; line-height: 33px; }
.s-h3 { font-family: "Liberation Serif", serif; font-size: 20px; font-weight: 700; }
.s-sub { font-size: 20px; font-weight: 500; line-height: 33px; }
.s-em { font-family: "Liberation Serif", serif; font-size: 15px; font-style: italic; color: #404040; }
.style small { font-size: 9px; }
.gallery-nav { display: flex; flex: none; flex-direction: column; width: 15px; color: #555; }
.gallery-nav button { flex: 1; display: grid; place-items: center; border-left: 1px solid #c6c6c6; border-top: 1px solid #c6c6c6; }
.gallery-nav button:first-child { border-top: 0; background: #e6e6e6; }
.collapse { flex: none; width: 34px; padding-left: 17px; align-self: flex-end; height: 17px; }

/* quick access */
.quick { display: flex; flex: none; align-items: center; gap: 5px; height: 34px; padding-left: 2px; }
.quick .chev { margin: 0 -4px 0 -6px; padding-left: 4px; }
.q-save { margin-right: -1px; }

/* ruler */
.workspace { flex: 1; min-height: 0; overflow: hidden; }
.ruler-row { display: flex; height: 29px; }
.tab-stop { flex: none; display: grid; place-items: center; width: 27px; height: 27px; background: #fdfdfd; border: 3px solid #dcdcdc; border-left-width: 2px; border-right-width: 4px; }
.ruler-wrap { flex: 1; display: flex; justify-content: center; padding-right: 11px; }
.ruler { position: relative; display: flex; width: 711px; height: 16px; margin-top: 4px; }
.r-margin-left { width: 106px; background: #c6c6c6; }
.r-body { flex: 1; background: #fff; }
.r-margin-right { width: 109px; margin-left: 2px; background: #c6c6c6; }
.r-nums { position: absolute; left: 120px; right: -12px; top: 0; display: grid; grid-template-columns: repeat(21, 1fr); text-align: center; font: 10px/17px "Liberation Sans", sans-serif; color: #444; }
.r-indent { position: absolute; left: 101px; top: -3px; }
.r-right { position: absolute; right: 103px; top: 9px; }

/* document */
.pages { display: flex; flex-direction: column; align-items: center; padding-left: 16px; }
.prev-page { width: 711px; height: 12px; background: #fff; border: 1px solid #c6c6c6; border-top: 0; }
.page {
  position: relative;
  width: 711px;
  min-height: 1005px;
  margin-top: 13px;
  padding: 86px 107px 85px 105px;
  background: #fff;
  border: 1px solid #c6c6c6;
  color: #000;
  font: 14px/30px "Liberation Serif", "Noto Sans CJK SC", serif;
}
.page p { margin: 0 0 -1px; }
.page .first { margin: 0; }
.page span { display: block; white-space: nowrap; text-align-last: justify; }
.page span:last-child { text-align-last: left; }
.page .in { text-indent: 26px; }
.page .hang { margin-right: -12px; }
.page .quoted { font-family: "Noto Sans CJK SC", sans-serif; font-style: normal; line-height: 1; }
.corner { position: absolute; top: 64px; width: 21px; height: 21px; border-bottom: 1px solid #aaa; }
.corner-l { left: 85px; border-right: 1px solid #aaa; }
.corner-r { right: 85px; border-left: 1px solid #aaa; }

/* status bar */
.status { display: flex; flex: none; height: 16px; padding: 2px 0 0 6px; gap: 20px; background: #f3f3f3; border-top: 1px solid #c6c6c6; overflow: hidden; white-space: nowrap; }
.status > svg { margin-top: 2px; }
.access { display: flex; gap: 2px; }
.access svg { margin-top: 2px; }
.views { display: flex; margin: -2px 0 0 auto; padding-right: 21px; height: 22px; align-items: center; }
.view { display: grid; place-items: center; width: 40px; height: 22px; }
.view-on { background: #c6c6c6; }
.zoom-btn { width: 8px; margin: 0 5px 0 6px; }
.zoom { appearance: none; width: 100px; height: 10px; background: linear-gradient(#333, #333) center / 100% 1px no-repeat; }
.zoom::-webkit-slider-thumb { appearance: none; width: 5px; height: 10px; background: #444; }
.zoom-plus { margin: 0 13px 0 5px; width: 9px; }
.zoom-plus, .pct { flex: none; }

/* site mark */
.watermark { position: absolute; right: 8px; bottom: 7px; display: flex; gap: 1px; }
.watermark div { display: flex; flex-direction: column; }
.watermark strong { font-size: 21px; line-height: 25px; font-weight: 700; color: #5f9bd3; }
.watermark em { font: 700 16px/18px "Liberation Sans", sans-serif; color: #62bd74; }

/* pointer arrows */
.arrows { position: absolute; left: 0; top: 0; z-index: 9; pointer-events: none; }
.red { fill: #f60d0d; filter: drop-shadow(3px 3px 2px #0008); }
```
